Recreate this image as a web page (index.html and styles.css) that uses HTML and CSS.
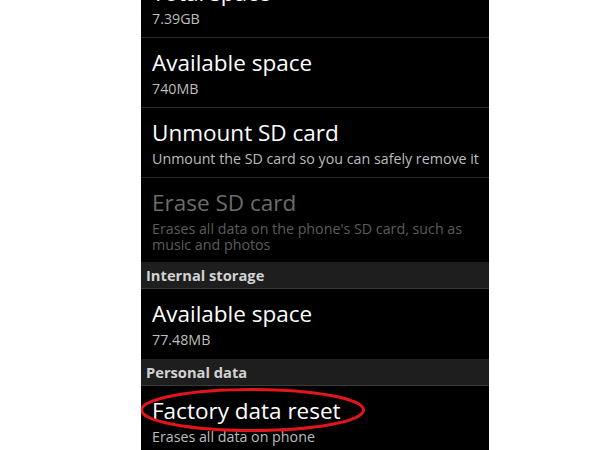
FILE: index.html
```html
<!DOCTYPE html>
<html>
<head>
<meta charset="utf-8">
<link rel="stylesheet" href="styles.css">
</head>
<body>
<div class="screen">
  <div class="list">
    <div class="pref">
      <div class="title">Total space</div>
      <div class="summary">7.39GB</div>
    </div>
    <div class="pref">
      <div class="title">Available space</div>
      <div class="summary">740MB</div>
    </div>
    <div class="pref">
      <div class="title">Unmount SD card</div>
      <div class="summary">Unmount the SD card so you can safely remove it</div>
    </div>
    <div class="pref disabled last">
      <div class="title">Erase SD card</div>
      <div class="summary">Erases all data on the phone's SD card, such as music and photos</div>
    </div>
    <div class="header">Internal storage</div>
    <div class="pref last">
      <div class="title">Available space</div>
      <div class="summary">77.48MB</div>
    </div>
    <div class="header">Personal data</div>
    <div class="pref highlight">
      <div class="title">Factory data reset</div>
      <div class="summary">Erases all data on phone</div>
      <svg class="circle" width="232" height="50" viewBox="0 0 232 50">
        <ellipse cx="113.5" cy="24" rx="111" ry="20.5" fill="none" stroke="#e3141b" stroke-width="3"/>
      </svg>
    </div>
  </div>
</div>
</body>
</html>
```

FILE: styles.css
```css
html, body {
  margin: 0;
  padding: 0;
  background: #ffffff;
}

.screen {
  margin-left: 141px;
  width: 348px;
  height: 450px;
  background: #000000;
  overflow: hidden;
  font-family: "Open Sans", "DejaVu Sans", sans-serif;
}

.list {
  margin-top: -32px;
  display: flex;
  flex-direction: column;
}

.pref {
  position: relative;
  padding: 9px 6px 10px 11px;
  min-height: 50px;
  border-bottom: 1px solid #2a2a2a;
}

.pref.last {
  border-bottom-color: #000;
}

.pref.disabled {
  padding-bottom: 8px;
}

.title {
  font-size: 22.5px;
  line-height: 31px;
  color: #ffffff;
  white-space: nowrap;
}

.summary {
  margin-top: 3px;
  font-size: 14.25px;
  line-height: 16px;
  color: #bdbdbd;
}

.disabled .title {
  color: #6c6c6c;
}

.disabled .summary {
  color: #5c5c5c;
}

.header {
  height: 26px;
  line-height: 26px;
  padding-left: 5px;
  background: #1e1e1e;
  border-bottom: 1px solid #3a3a3a;
  color: #d2d2d2;
  font-size: 14.7px;
  font-weight: bold;
}

.circle {
  position: absolute;
  left: -2px;
  top: 0;
}
```
